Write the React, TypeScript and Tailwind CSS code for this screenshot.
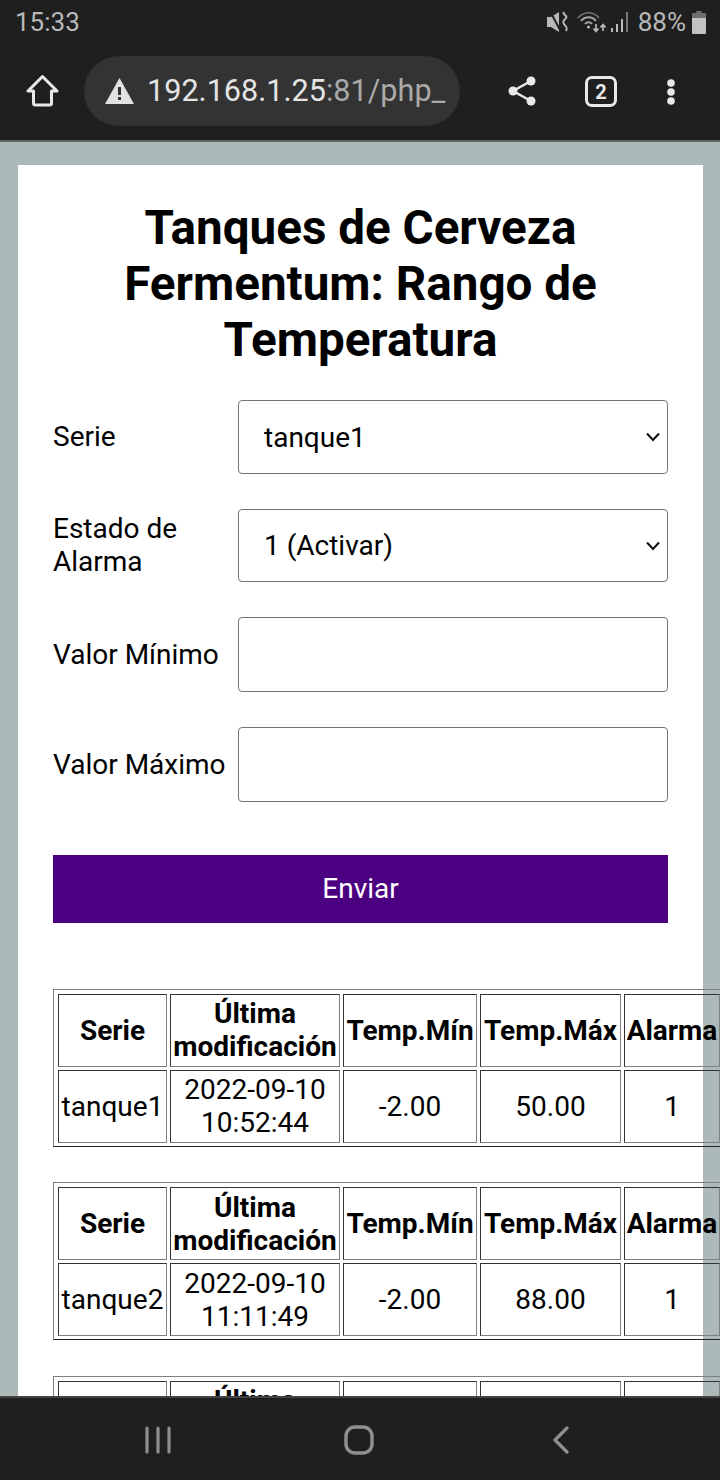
const rows = [
  { serie: 'tanque1', fecha: '2022-09-10', hora: '10:52:44', min: '-2.00', max: '50.00', alarma: '1' },
  { serie: 'tanque2', fecha: '2022-09-10', hora: '11:11:49', min: '-2.00', max: '88.00', alarma: '1' },
  { serie: 'tanque3', fecha: '2022-09-10', hora: '11:11:49', min: '-2.00', max: '88.00', alarma: '1' },
];

const cellBase =
  'h-[73px] p-px text-center align-middle border border-t-[#333] border-l-[#333] border-r-[#808080] border-b-[#808080]';

function StatusBar() {
  return (
    <div className="h-[44px] flex items-center justify-between pl-[15px] pr-[14px] text-[#b9b9b9] text-[26px]">
      <span className="leading-none">15:33</span>
      <div className="flex items-center">
        {/* muted + vibrate */}
        <svg width="22" height="22" viewBox="0 0 22 22" fill="none">
          <path d="M0 6h4l8-5v20l-8-5H0z" fill="#b9b9b9" />
          <path d="M3 0l10 19" stroke="#1f1f1f" strokeWidth="2" />
          <path d="M17 1c-2 3 4 3 2 6s-4 3-2 6 4 3 2 7" stroke="#b9b9b9" strokeWidth="2" />
        </svg>
        {/* wifi with arrows */}
        <svg className="ml-[8px]" width="29" height="22" viewBox="0 0 29 22" fill="none" stroke="#a5a5a5">
          <path d="M1 7c6-7 15-7 21 0" strokeWidth="1.5" stroke="#777" />
          <path d="M4 10c4-5 11-5 15 0" strokeWidth="2" />
          <path d="M8 13c2-2.500 5-2.500 7 0" strokeWidth="2" />
          <circle cx="11.500" cy="16" r="1.500" fill="#b9b9b9" stroke="none" />
          <path d="M19 13v7m-2.500-2.500l2.500 3 2.500-3M26 20v-6m-2.500 2.500l2.500-3 2.500 3" strokeWidth="1.700" stroke="#b9b9b9" />
        </svg>
        {/* signal */}
        <svg className="ml-[5px]" width="18" height="22" viewBox="0 0 18 22" fill="#b9b9b9">
          <rect x="0" y="17" width="2" height="4" />
          <rect x="5" y="13" width="2" height="8" />
          <rect x="10" y="8" width="2" height="13" />
          <rect x="15" y="1" width="2" height="20" fill="#777" />
        </svg>
        <span className="ml-[9px] leading-none">88%</span>
        {/* battery */}
        <svg className="ml-[6px]" width="14" height="23" viewBox="0 0 13 23" preserveAspectRatio="none">
          <path d="M4 0h5v2h3a1 1 0 0 1 1 1v4H0V3a1 1 0 0 1 1-1h3z" fill="#6f6f6f" />
          <path d="M0 7h13v15a1 1 0 0 1-1 1H1a1 1 0 0 1-1-1z" fill="#c2c2c2" />
        </svg>
      </div>
    </div>
  );
}

function Toolbar() {
  return (
    <div className="h-[96px] flex items-start">
      <svg className="ml-[26px] mt-[30px]" width="33" height="33" viewBox="0 0 33 33" fill="none" stroke="#e8e8e8" strokeWidth="3" strokeLinejoin="round">
        <path d="M16.500 2.500L2 17h5.500v12a2 2 0 0 0 2 2h14a2 2 0 0 0 2-2V17H31z" />
      </svg>
      <div className="ml-[25px] mt-[12px] w-[376px] h-[70px] rounded-full bg-[#333333] flex items-center pl-[21px] overflow-hidden">
        <svg width="29" height="26" viewBox="0 0 29 26">
          <path d="M14.500 0L29 26H0z" fill="#e2e2e2" />
          <rect x="13" y="9" width="3" height="8" fill="#333333" />
          <rect x="13" y="19" width="3" height="3" fill="#333333" />
        </svg>
        <span className="ml-[13px] text-[30.600px] leading-none whitespace-nowrap">
          <span className="text-[#e4e4e4]">192.168.1.25</span>
          <span className="text-[#a9a9a9]">:81/php_</span>
        </span>
      </div>
      <svg className="ml-[48px] mt-[32px]" width="28" height="30" viewBox="0 0 28 30" fill="#e8e8e8" stroke="#e8e8e8">
        <circle cx="23" cy="5" r="4.500" stroke="none" />
        <circle cx="5" cy="15" r="4.500" stroke="none" />
        <circle cx="23" cy="25" r="4.500" stroke="none" />
        <path d="M23 5L5 15l18 10" fill="none" strokeWidth="2.500" />
      </svg>
      <div className="ml-[49px] mt-[32px] w-[32px] h-[31px] rounded-[7px] border-[3px] border-[#e8e8e8] flex items-center justify-center text-[#e8e8e8] text-[20px] font-bold leading-none">
        2
      </div>
      <svg className="ml-[48px] mt-[35px]" width="12" height="26" viewBox="0 0 12 26" fill="#e8e8e8">
        <circle cx="6" cy="4" r="3.800" />
        <circle cx="6" cy="13" r="3.800" />
        <circle cx="6" cy="22" r="3.800" />
      </svg>
    </div>
  );
}

function Chevron() {
  return (
    <svg className="absolute right-[7px] top-1/2 -translate-y-1/2 pointer-events-none" width="16" height="10" viewBox="0 0 16 10" fill="none" stroke="#111" strokeWidth="2">
      <path d="M2 1.500l6 6.500 6-6.500" />
    </svg>
  );
}

function DataTable({ row }: { row: (typeof rows)[number] }) {
  return (
    <table className="table-fixed w-[671px] mb-[35.600px] border border-separate border-spacing-[3px] pt-px pl-px border-t-[#808080] border-l-[#808080] border-r-[#222] border-b-[#222]">
      <tbody>
        <tr className="font-bold">
          <th className={`${cellBase} w-[109px]`}>Serie</th>
          <th className={`${cellBase} w-[170px]`}>
            Última
            <br />
            modificación
          </th>
          <th className={`${cellBase} w-[134px]`}>Temp.Mín</th>
          <th className={`${cellBase} w-[141px]`}>Temp.Máx</th>
          <th className={`${cellBase} w-[96px]`}>Alarma</th>
        </tr>
        <tr>
          <td className={cellBase}>{row.serie}</td>
          <td className={cellBase}>
            {row.fecha}
            <br />
            {row.hora}
          </td>
          <td className={cellBase}>{row.min}</td>
          <td className={cellBase}>{row.max}</td>
          <td className={cellBase}>{row.alarma}</td>
        </tr>
      </tbody>
    </table>
  );
}

function Field({ label, className, labelClass = '', children }: { label: React.ReactNode; className: string; labelClass?: string; children: React.ReactNode }) {
  return (
    <div className={`flex items-center ${className}`}>
      <label className={`w-[185px] shrink-0 ${labelClass}`}>{label}</label>
      <div className="relative w-[430px] h-full">{children}</div>
    </div>
  );
}

const controlClass =
  'block w-full h-full rounded-[4px] border border-[#767676] bg-white pl-[25px] pr-[30px] appearance-none text-black text-[28px] leading-[33px]';

export default function App() {
  return (
    <div
      className="h-[1480px] w-[720px] overflow-hidden flex flex-col bg-[#1f1f1f] text-black text-[28px] leading-[33px]"
      style={{ fontFamily: 'Roboto, sans-serif' }}
    >
      <StatusBar />
      <Toolbar />
      <div className="h-[2px] bg-[#5b6565] shrink-0" />
      <main className="flex-1 min-h-0 overflow-hidden bg-[#abb9b8] pt-[23px] pl-[18px]">
        <div className="w-[685px] min-h-[1300px] bg-white px-[35px] pt-[35px]">
          <h1 className="text-center font-bold text-[47.600px] leading-[56px] mb-[32px]">
            Tanques de Cerveza Fermentum: Rango de Temperatura
          </h1>

          <Field label="Serie" className="h-[74px] mb-[35px]" labelClass="pb-[2px]">
            <select className={controlClass} defaultValue="tanque1">
              <option>tanque1</option>
            </select>
            <Chevron />
          </Field>
          <Field label="Estado de Alarma" className="h-[73px] mb-[35px]" labelClass="pb-[2px]">
            <select className={controlClass} defaultValue="1 (Activar)">
              <option>1 (Activar)</option>
            </select>
            <Chevron />
          </Field>
          <Field label="Valor Mínimo" className="h-[75px] mb-[35px]">
            <input type="text" className={controlClass} />
          </Field>
          <Field label="Valor Máximo" className="h-[75px] mb-[53px]">
            <input type="text" className={controlClass} />
          </Field>

          <button className="block w-[615px] h-[68px] pb-[2px] bg-[#4b0082] text-white text-center mb-[65.600px]">Enviar</button>

          {rows.map((row) => (
            <DataTable key={row.serie} row={row} />
          ))}
        </div>
      </main>
      <nav className="h-[84px] shrink-0 border-t-2 border-[#444] flex items-center justify-center pr-[5px]">
        <svg className="mt-[2px]" width="26" height="28" viewBox="0 0 26 28" fill="none" stroke="#8f8f8f" strokeWidth="3.200" strokeLinecap="round">
          <path d="M2 2v24M13 2v24M24 2v24" />
        </svg>
        <svg className="ml-[173px] mt-[2px]" width="30" height="30" viewBox="0 0 30 30" fill="none" stroke="#8f8f8f" strokeWidth="3.500">
          <rect x="2" y="2" width="26" height="26" rx="9" />
        </svg>
        <svg className="ml-[178px] mt-[2px]" width="18" height="28" viewBox="0 0 18 28" fill="none" stroke="#8f8f8f" strokeWidth="3.200" strokeLinecap="round" strokeLinejoin="round">
          <path d="M15 2L3 14l12 12" />
        </svg>
      </nav>
    </div>
  );
}
